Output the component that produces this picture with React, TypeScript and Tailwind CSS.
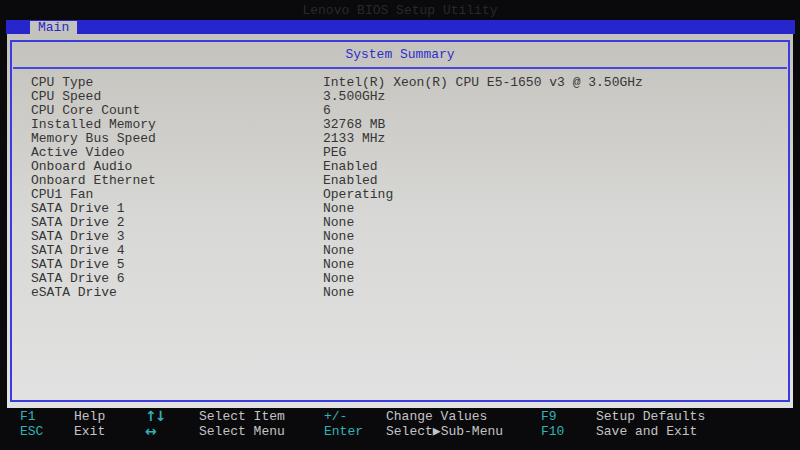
const rows: [string, string][] = [
  ['CPU Type', 'Intel(R) Xeon(R) CPU E5-1650 v3 @ 3.50GHz'],
  ['CPU Speed', '3.500GHz'],
  ['CPU Core Count', '6'],
  ['Installed Memory', '32768 MB'],
  ['Memory Bus Speed', '2133 MHz'],
  ['Active Video', 'PEG'],
  ['Onboard Audio', 'Enabled'],
  ['Onboard Ethernet', 'Enabled'],
  ['CPU1 Fan', 'Operating'],
  ['SATA Drive 1', 'None'],
  ['SATA Drive 2', 'None'],
  ['SATA Drive 3', 'None'],
  ['SATA Drive 4', 'None'],
  ['SATA Drive 5', 'None'],
  ['SATA Drive 6', 'None'],
  ['eSATA Drive', 'None'],
];

const help: [string, string, string, string, string, string, string, string][] = [
  ['F1', 'Help', '↑↓', 'Select Item', '+/-', 'Change Values', 'F9', 'Setup Defaults'],
  ['ESC', 'Exit', '↔', 'Select Menu', 'Enter', 'Select▶Sub-Menu', 'F10', 'Save and Exit'],
];

export default function App() {
  return (
    <div className="w-[800px] h-[450px] bg-[#0a0a0c] overflow-hidden font-['Liberation_Mono',monospace] text-[13px]">
      {/* title */}
      <div className="h-[20px] flex items-center justify-center pt-[2px] text-[#28282e]">
        Lenovo BIOS Setup Utility
      </div>

      {/* menu bar */}
      <div className="ml-[6px] mr-[5px] h-[14px] bg-[#2626cc] flex items-end pl-[24px]">
        <div className="h-[13px] px-[8px] bg-[#c4c2bc] text-[#2a2ac4] leading-[14px]">Main</div>
      </div>

      {/* panel */}
      <div className="ml-[7px] mr-[7px] h-[374px] bg-linear-to-b from-[#c4c2bc] via-[#d8d8d6] to-[#e2e2e2] px-[3px] py-[6px]">
        <div className="h-full border-2 border-[#3c3cdc]">
          <div className="h-[27px] flex items-center justify-center text-[#2e2ecc] border-b-2 border-[#4848d8] mx-[1px]">
            System Summary
          </div>
          <div className="pt-[7px] pl-[19px] grid grid-cols-[292px_1fr] leading-[14px] text-[#353535]">
            {rows.map(([k, v]) => (
              <div key={k} className="contents">
                <div>{k}</div>
                <div>{v}</div>
              </div>
            ))}
          </div>
        </div>
      </div>

      {/* help bar */}
      <div className="pt-[1px] leading-[15px]">
        {help.map((r, i) => (
          <div key={i} className="grid grid-cols-[54px_71px_54px_125px_62px_155px_55px_1fr] pl-[20px] h-[15px]">
            <div className="text-[#2fb2b8]">{r[0]}</div>
            <div className="text-[#c4c4c4]">{r[1]}</div>
            <div className="text-[#2fb2b8] font-bold text-[14px] leading-[15px] font-['DejaVu_Sans',sans-serif] tracking-[-2px]">{r[2]}</div>
            <div className="text-[#c4c4c4]">{r[3]}</div>
            <div className="text-[#2fb2b8]">{r[4]}</div>
            <div className="text-[#c4c4c4]">{r[5]}</div>
            <div className="text-[#2fb2b8]">{r[6]}</div>
            <div className="text-[#c4c4c4]">{r[7]}</div>
          </div>
        ))}
      </div>
    </div>
  );
}
